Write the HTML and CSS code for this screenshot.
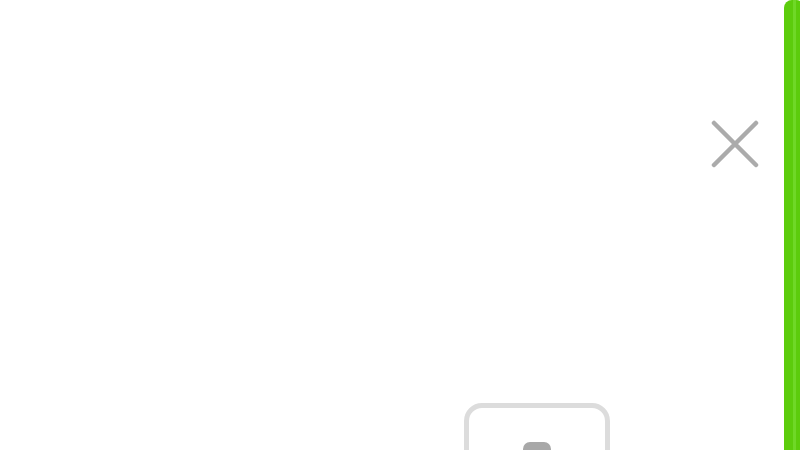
FILE: index.html
```html
<!DOCTYPE html>
<html lang="en">
<head>
    <meta charset="UTF-8">
    <meta name="viewport" content="width=device-width, initial-scale=1.0">
    <title>Panel</title>
    <link rel="stylesheet" href="styles.css">
</head>
<body>
    <div class="screen">
        <div class="content">
            <button type="button" class="close" aria-label="Close">
                <svg width="48" height="48" viewBox="0 0 48 48">
                    <path d="M3 3 L45 45 M45 3 L3 45" stroke="#ababab" stroke-width="4.5" stroke-linecap="round" fill="none"/>
                </svg>
            </button>
            <div class="card">
                <div class="handle"></div>
            </div>
        </div>
        <div class="rail"></div>
    </div>
</body>
</html>
```

FILE: styles.css
```css
body {
    margin: 0;
    font-family: "Liberation Sans", Arial, sans-serif;
    background: #fff;
}

.screen {
    display: flex;
    height: 450px;
    overflow: hidden;
}

.content {
    flex: 1;
    display: flex;
    flex-direction: column;
    padding: 120px 25px 0 0;
}

.close {
    align-self: flex-end;
    width: 48px;
    height: 48px;
    padding: 0;
    border: none;
    background: none;
    cursor: pointer;
}

.close svg {
    display: block;
}

.card {
    width: 146px;
    height: 120px;
    margin: 235px 0 0 464px;
    padding-top: 34px;
    border: 5px solid #dcdcdc;
    border-radius: 18px;
    box-sizing: border-box;
    flex-shrink: 0;
}

.handle {
    width: 28px;
    height: 14px;
    margin: 0 auto;
    background: #a8a8a8;
    border-radius: 7px;
}

.rail {
    width: 20px;
    margin-right: -4px;
    flex-shrink: 0;
    border-radius: 8px 8px 0 0;
    background: linear-gradient(to right, #5ccc0c 0, #5ccc0c 9px, #6fd827 9px, #6fd827 12px, #5ccc0c 12px);
}
```
